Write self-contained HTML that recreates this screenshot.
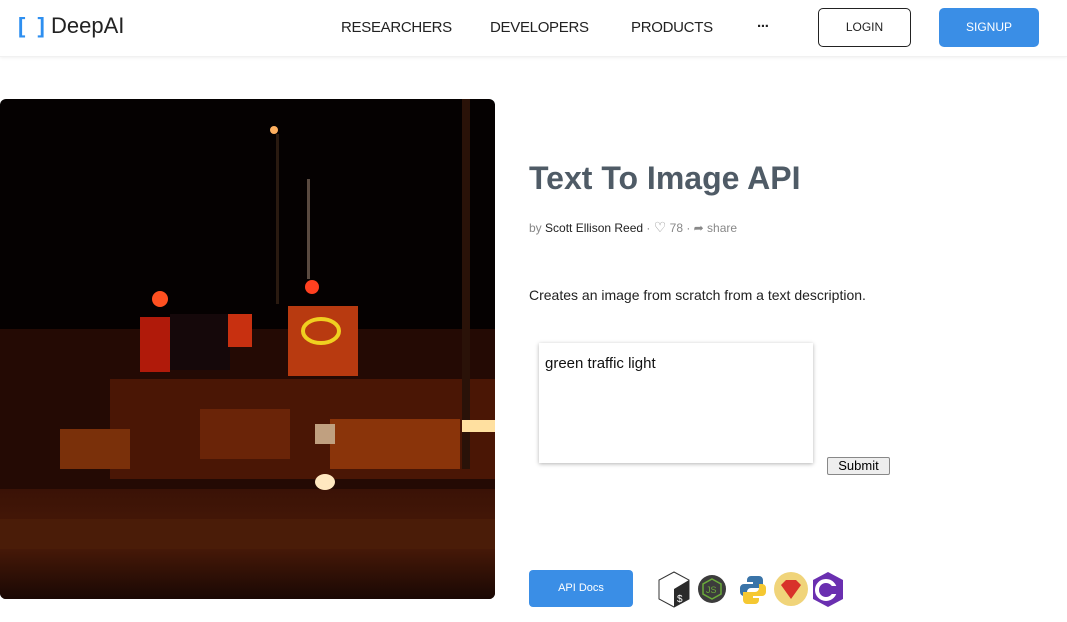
<!DOCTYPE html>
<html><head><meta charset="utf-8"><style>
*{margin:0;padding:0;box-sizing:border-box}
body{width:1067px;height:622px;overflow:hidden;background:#fff;font-family:"Liberation Sans",sans-serif;position:relative}
.hdr{position:absolute;left:0;top:0;width:1067px;height:57px;background:#fff;box-shadow:0 1px 3px rgba(0,0,0,.06);border-bottom:1px solid #f1f1f1}
.logo{position:absolute;left:18px;top:13px;font-size:22px;color:#222}
.logo b{color:#2e8ff0;font-weight:bold}
.nav{position:absolute;top:19px;font-size:15px;color:#222;letter-spacing:-0.3px}
.btn{position:absolute;top:8px;height:39px;border-radius:5px;font-size:12px;text-align:center;line-height:37px}
.t{position:absolute}
</style></head><body>
<div class="hdr">
<div class="logo"><b>[&nbsp;&nbsp;]</b> DeepAI</div>
<div class="nav" style="left:341px">RESEARCHERS</div>
<div class="nav" style="left:490px">DEVELOPERS</div>
<div class="nav" style="left:631px">PRODUCTS</div>
<div class="nav" style="left:757px;top:14px;font-weight:bold">...</div>
<div class="btn" style="left:818px;width:93px;border:1px solid #222;color:#222">LOGIN</div>
<div class="btn" style="left:939px;width:100px;background:#3a8ee6;color:#fff;border:1px solid #3a8ee6">SIGNUP</div>
</div>
<svg style="position:absolute;left:0;top:99px" width="495" height="500" viewBox="0 0 495 500">
<defs><clipPath id="c"><rect width="495" height="500" rx="6"/></clipPath>
<linearGradient id="g" x1="0" y1="0" x2="0" y2="1"><stop offset="0" stop-color="#3a1206"/><stop offset=".5" stop-color="#4a1a08"/><stop offset="1" stop-color="#1a0804"/></linearGradient></defs>
<g clip-path="url(#c)">
<rect width="495" height="500" fill="#050101"/>
<rect y="230" width="495" height="160" fill="#240a04"/>
<rect x="110" y="280" width="385" height="100" fill="#4a1605"/>
<rect x="60" y="330" width="70" height="40" fill="#7a300a"/>
<rect x="200" y="310" width="90" height="50" fill="#6a2408"/>
<rect x="330" y="320" width="130" height="50" fill="#8a340a"/>
<rect y="390" width="495" height="110" fill="url(#g)"/>
<rect y="420" width="495" height="30" fill="#4a1c08"/>
<rect x="140" y="218" width="30" height="55" fill="#b01a0a"/>
<rect x="170" y="215" width="60" height="56" fill="#15080a"/>
<rect x="228" y="215" width="24" height="33" fill="#c83010"/>
<rect x="288" y="207" width="70" height="70" fill="#b83a10"/>
<ellipse cx="321" cy="232" rx="18" ry="12" fill="none" stroke="#f0d020" stroke-width="4"/>
<circle cx="160" cy="200" r="8" fill="#ff5020"/>
<circle cx="312" cy="188" r="7" fill="#ff4020"/>
<circle cx="274" cy="31" r="4" fill="#ffb060"/>
<rect x="276" y="35" width="3" height="170" fill="#2a1a10"/>
<rect x="307" y="80" width="3" height="100" fill="#5a4a40"/>
<rect x="462" y="0" width="8" height="370" fill="#2a1208"/>
<rect x="462" y="321" width="33" height="12" fill="#ffe0a0"/>
<ellipse cx="325" cy="383" rx="10" ry="8" fill="#ffe8c0"/>
<rect x="315" y="325" width="20" height="20" fill="#c0a080"/>
</g></svg>
<div class="t" style="left:529px;top:160px;font-size:32px;font-weight:bold;color:#4f5b66">Text To Image API</div>
<div class="t" style="left:529px;top:219px;font-size:12px;color:#888">by <span style="color:#222">Scott Ellison Reed</span> · <span style="font-size:14px">♡</span> 78 · ➦ share</div>
<div class="t" style="left:529px;top:287px;font-size:14px;color:#222">Creates an image from scratch from a text description.</div>
<div class="t" style="left:539px;top:343px;width:274px;height:120px;background:#fff;box-shadow:0 1px 4px rgba(0,0,0,.3);padding:12px 6px;font-size:15px;color:#111">green traffic light</div>
<div class="t" style="left:827px;top:457px;width:63px;height:18px;border:1px solid #888;border-radius:2px;background:#eee;font-size:13px;text-align:center;line-height:16px">Submit</div>
<div class="t" style="left:529px;top:570px;width:104px;height:37px;background:#3a8ee6;border-radius:4px;color:#fff;font-size:11px;text-align:center;line-height:37px">API Docs</div>
<svg style="position:absolute;left:656px;top:570px" width="195" height="40">
<polygon points="18,2 33,10 33,29 18,37 3,29 3,10" fill="#fff" stroke="#333"/>
<polygon points="18,19 33,10 33,29 18,37" fill="#2a2a2a"/>
<text x="21" y="32" font-size="10" fill="#fff" font-family="Liberation Sans">$</text>
<circle cx="56" cy="19" r="14" fill="#3c3c3c"/>
<polygon points="56,9 65,14 65,24 56,29 47,24 47,14" fill="none" stroke="#6aaa3a" stroke-width="1.5"/>
<text x="50" y="23" font-size="9" fill="#6aaa3a" font-family="Liberation Sans">JS</text>
<path d="M95 6h8a4 4 0 0 1 4 4v8h-12a4 4 0 0 0-4 4v4h-3a4 4 0 0 1-4-4v-4a4 4 0 0 1 4-4h9v-2h-6v-2a4 4 0 0 1 4-4z" fill="#3a74a8"/>
<path d="M99 34h-8a4 4 0 0 1-4-4v-8h12a4 4 0 0 0 4-4v-4h3a4 4 0 0 1 4 4v4a4 4 0 0 1-4 4h-9v2h6v2a4 4 0 0 1-4 4z" fill="#f5c832"/>
<circle cx="135" cy="19" r="17" fill="#f0d47a"/>
<polygon points="125,15 130,10 140,10 145,15 135,29" fill="#d8322a"/>
<polygon points="172,2 187,10 187,29 172,37 157,29 157,10" fill="#6a2fb0"/>
<circle cx="170" cy="20" r="9" fill="none" stroke="#fff" stroke-width="4"/>
<rect x="174" y="16" width="8" height="8" fill="#6a2fb0"/>
</svg>
</body></html>
